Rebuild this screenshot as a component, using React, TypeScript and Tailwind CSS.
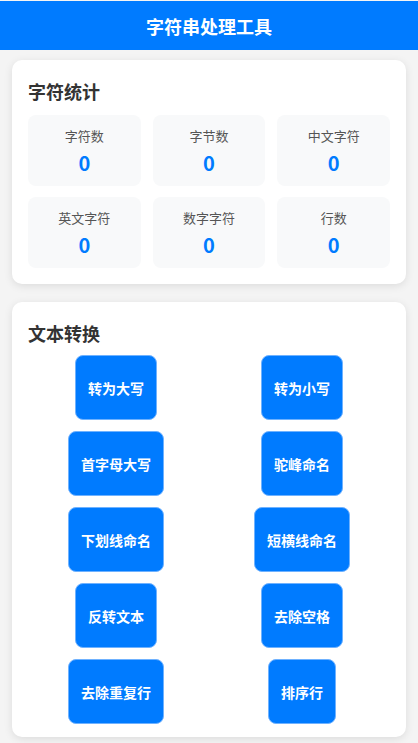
import React from "react";

const stats = [
  { label: "字符数", value: 0 },
  { label: "字节数", value: 0 },
  { label: "中文字符", value: 0 },
  { label: "英文字符", value: 0 },
  { label: "数字字符", value: 0 },
  { label: "行数", value: 0 },
];

const actions = [
  "转为大写",
  "转为小写",
  "首字母大写",
  "驼峰命名",
  "下划线命名",
  "短横线命名",
  "反转文本",
  "去除空格",
  "去除重复行",
  "排序行",
];

export default function App() {
  return (
    <div
      className="min-h-[743px] bg-[#f4f4f4] pt-px"
      style={{ fontFamily: '"Noto Sans CJK SC", "Noto Sans", sans-serif' }}
    >
      <header className="flex h-[49px] items-center justify-center bg-[#007bff]">
        <h1 className="text-lg font-bold text-white">字符串处理工具</h1>
      </header>

      <main className="px-3 pt-[10px] pb-2">
        <section className="mb-[18px] rounded-[10px] bg-white px-4 pt-4 pb-4 shadow-[0_2px_8px_rgba(0,0,0,0.1)]">
          <h2 className="mb-[9px] text-lg leading-[30px] font-bold text-[#333]">字符统计</h2>
          <div className="grid grid-cols-3 gap-[12px] gap-y-[11px]">
            {stats.map((s) => (
              <div
                key={s.label}
                className="flex h-[71px] flex-col items-center justify-center gap-[5px] rounded-lg bg-[#f8f9fa]"
              >
                <div className="text-[13px] leading-5 text-[#555]">{s.label}</div>
                <div className="text-xl leading-6 font-bold text-[#007bff]">{s.value}</div>
              </div>
            ))}
          </div>
        </section>

        <section className="rounded-[10px] bg-white px-4 pt-4 pb-[13px] shadow-[0_2px_8px_rgba(0,0,0,0.1)]">
          <h2 className="mb-[7px] text-lg leading-[30px] font-bold text-[#333]">文本转换</h2>
          <div className="grid grid-cols-2 justify-items-center gap-x-[10px] gap-y-[11px]">
            {actions.map((a) => (
              <button
                key={a}
                className="h-[65px] rounded-lg border border-[#6fb2ff] bg-[#007bff] px-3 text-sm font-bold text-white"
              >
                {a}
              </button>
            ))}
          </div>
        </section>
      </main>
    </div>
  );
}
